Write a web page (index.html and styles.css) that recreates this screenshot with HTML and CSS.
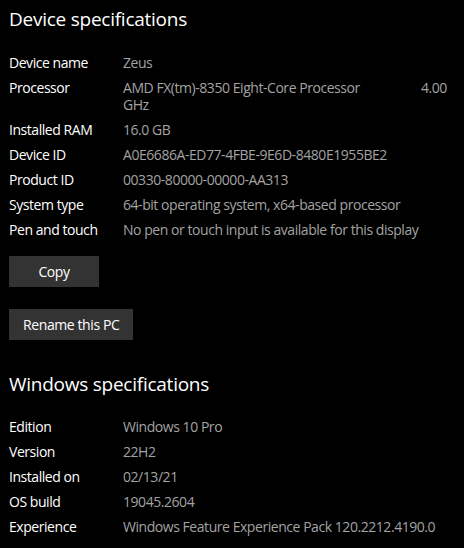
FILE: index.html
```
<!DOCTYPE html>
<html>
<head>
<meta charset="utf-8">
<link rel="stylesheet" href="styles.css">
</head>
<body>
<div class="page">
  <h2 class="title">Device specifications</h2>
  <div class="specs specs-device">
    <div class="label">Device name</div><div class="value">Zeus</div>
    <div class="label">Processor</div><div class="value"><div class="cpu-line"><span class="cpu">AMD FX(tm)-8350 Eight-Core Processor</span><span class="freq">4.00</span></div><div>GHz</div></div>
    <div class="label">Installed RAM</div><div class="value">16.0 GB</div>
    <div class="label">Device ID</div><div class="value">A0E6686A-ED77-4FBE-9E6D-8480E1955BE2</div>
    <div class="label">Product ID</div><div class="value">00330-80000-00000-AA313</div>
    <div class="label">System type</div><div class="value">64-bit operating system, x64-based processor</div>
    <div class="label">Pen and touch</div><div class="value">No pen or touch input is available for this display</div>
  </div>
  <div class="actions">
    <button class="btn">Copy</button>
    <button class="btn">Rename this PC</button>
  </div>
  <h2 class="title title-win">Windows specifications</h2>
  <div class="specs">
    <div class="label">Edition</div><div class="value">Windows 10 Pro</div>
    <div class="label">Version</div><div class="value">22H2</div>
    <div class="label">Installed on</div><div class="value">02/13/21</div>
    <div class="label">OS build</div><div class="value">19045.2604</div>
    <div class="label">Experience</div><div class="value">Windows Feature Experience Pack 120.2212.4190.0</div>
  </div>
</div>
</body>
</html>
```
FILE: styles.css
```
html, body {
  margin: 0;
  padding: 0;
  background: #000;
}
body {
  font-family: "Open Sans", "Noto Sans", sans-serif;
  color: #fff;
  font-size: 14px;
}
.page {
  padding: 5px 0 0 9px;
  width: 455px;
  height: 543px;
  overflow: hidden;
}
.title {
  margin: 0;
  font-size: 19px;
  font-weight: 400;
  line-height: 28px;
  letter-spacing: -0.25px;
}
.title-win {
  margin-top: 30px;
}
.specs {
  display: grid;
  grid-template-columns: 114px 1fr;
  row-gap: 8px;
  margin-top: 20px;
  line-height: 17px;
  letter-spacing: -0.45px;
}
.specs-device {
  margin-top: 21px;
}
.label {
  color: #fff;
}
.value {
  color: #a3a3a3;
  white-space: nowrap;
}
.cpu-line {
  display: flex;
}
.cpu {
  width: 298px;
}
.actions {
  display: flex;
  flex-direction: column;
  align-items: flex-start;
  gap: 22px;
  margin-top: 18px;
}
.btn {
  min-width: 90px;
  height: 31px;
  padding: 0 14px;
  border: none;
  background: #333;
  color: #fff;
  font-family: inherit;
  font-size: 14px;
  letter-spacing: -0.4px;
}
```
